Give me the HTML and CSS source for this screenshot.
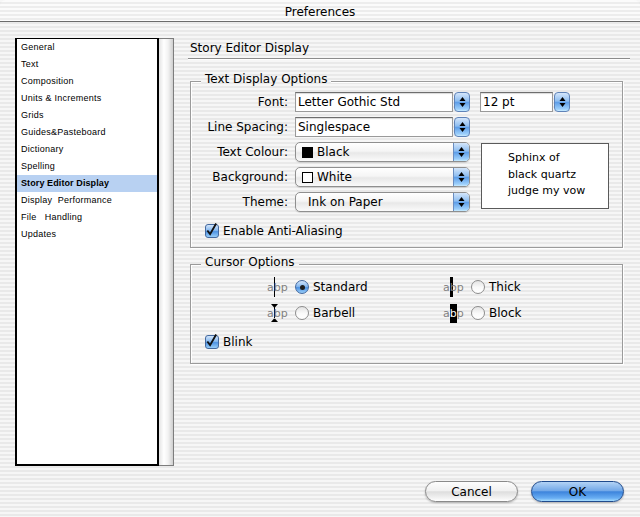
FILE: index.html
```html
<!DOCTYPE html>
<html lang="en">
  <head>
    <meta charset="UTF-8" />
    <title>Preferences</title>
    <link rel="stylesheet" href="styles.css">
  </head>
  <body>
    <div class="window">
      <div class="titlebar">Preferences</div>

      <div class="main">
        <div class="sidebar">
          <ul class="list">
            <li>General</li>
            <li>Text</li>
            <li>Composition</li>
            <li>Units &amp; Increments</li>
            <li>Grids</li>
            <li>Guides&amp;Pasteboard</li>
            <li>Dictionary</li>
            <li>Spelling</li>
            <li class="selected">Story Editor Display</li>
            <li>Display&nbsp; Performance</li>
            <li>File&nbsp;&nbsp; Handling</li>
            <li>Updates</li>
          </ul>
          <div class="track"></div>
        </div>

        <div class="pane">
          <h2 class="pane-title">Story Editor Display</h2>

          <section class="group">
            <h3 class="group-title">Text Display Options</h3>
            <div class="form">
              <label class="label">Font:</label>
              <div class="combo">
                <span class="field">Letter Gothic Std</span>
                <span class="stepper"><svg width="7" height="12" viewBox="0 0 7 12"><path d="M3.5 1L6.5 5H0.5Z M0.5 7H6.5L3.5 11Z"/></svg></span>
              </div>
              <div class="combo size">
                <span class="field">12 pt</span>
                <span class="stepper"><svg width="7" height="12" viewBox="0 0 7 12"><path d="M3.5 1L6.5 5H0.5Z M0.5 7H6.5L3.5 11Z"/></svg></span>
              </div>

              <label class="label">Line Spacing:</label>
              <div class="combo">
                <span class="field">Singlespace</span>
                <span class="stepper"><svg width="7" height="12" viewBox="0 0 7 12"><path d="M3.5 1L6.5 5H0.5Z M0.5 7H6.5L3.5 11Z"/></svg></span>
              </div>
              <div></div>

              <label class="label">Text Colour:</label>
              <div class="popup">
                <span class="value"><i class="swatch black"></i>Black</span>
                <span class="arrows"><svg width="7" height="12" viewBox="0 0 7 12"><path d="M3.5 1L6.5 5H0.5Z M0.5 7H6.5L3.5 11Z"/></svg></span>
              </div>
              <div class="preview">Sphinx of<br>black quartz<br>judge my vow</div>

              <label class="label">Background:</label>
              <div class="popup">
                <span class="value"><i class="swatch white"></i>White</span>
                <span class="arrows"><svg width="7" height="12" viewBox="0 0 7 12"><path d="M3.5 1L6.5 5H0.5Z M0.5 7H6.5L3.5 11Z"/></svg></span>
              </div>

              <label class="label">Theme:</label>
              <div class="popup">
                <span class="value indent">Ink on Paper</span>
                <span class="arrows"><svg width="7" height="12" viewBox="0 0 7 12"><path d="M3.5 1L6.5 5H0.5Z M0.5 7H6.5L3.5 11Z"/></svg></span>
              </div>
            </div>

            <div class="check-row">
              <span class="checkbox"><svg width="14" height="16" viewBox="0 0 14 16"><path d="M2.5 8.5L5.5 12.5L12 1" fill="none" stroke="#111" stroke-width="2"/></svg></span>
              Enable Anti-Aliasing
            </div>
          </section>

          <section class="group cursor-group">
            <h3 class="group-title">Cursor Options</h3>
            <div class="cursors">
              <div class="cursor-opt">
                <span class="sample">a<i class="caret"></i>bp</span>
                <span class="radio on"></span>
                Standard
              </div>
              <div class="cursor-opt">
                <span class="sample">a<i class="caret thick"></i>bp</span>
                <span class="radio"></span>
                Thick
              </div>
              <div class="cursor-opt">
                <span class="sample">a<svg class="barbell" width="7" height="18" viewBox="0 0 7 18"><path d="M0 0H7L3.5 4Z M3 3H4V15H3Z M0 18H7L3.5 14Z"/></svg>bp</span>
                <span class="radio"></span>
                Barbell
              </div>
              <div class="cursor-opt">
                <span class="sample">a<b class="block">b</b>p</span>
                <span class="radio"></span>
                Block
              </div>
            </div>

            <div class="check-row blink">
              <span class="checkbox"><svg width="14" height="16" viewBox="0 0 14 16"><path d="M2.5 8.5L5.5 12.5L12 1" fill="none" stroke="#111" stroke-width="2"/></svg></span>
              Blink
            </div>
          </section>
        </div>
      </div>

      <div class="actions">
        <button class="btn">Cancel</button>
        <button class="btn btn-default">OK</button>
      </div>
    </div>
  </body>
</html>
```

FILE: styles.css
```css
* {
  box-sizing: border-box;
}

body {
  margin: 0;
  font-family: "DejaVu Sans", sans-serif;
  font-size: 12px;
  color: #000;
}

.window {
  width: 640px;
  height: 517px;
  overflow: hidden;
  background: repeating-linear-gradient(#f6f6f6 0 2px, #e9e9e9 2px 4px);
  background-attachment: fixed;
}

.titlebar {
  height: 22px;
  line-height: 24px;
  text-align: center;
  font-size: 12px;
  border-bottom: 1px solid #6b6b6b;
  border-radius: 6px 6px 0 0;
  background: repeating-linear-gradient(#fbfbfb 0 2px, #ededed 2px 4px);
}

.main {
  display: flex;
  gap: 14px;
  padding: 16px 10px 0 15px;
}

/* left list */

.sidebar {
  display: flex;
  width: 159px;
  height: 428px;
}

.list {
  flex: 1;
  margin: 0;
  padding: 0;
  list-style: none;
  background: #fff;
  border: 2px solid #000;
  border-top-width: 1px;
  font-family: "Liberation Sans", Arial, sans-serif;
  font-size: 9px;
  letter-spacing: 0.25px;
}

.list li {
  height: 17px;
  line-height: 17px;
  padding-left: 4px;
  white-space: nowrap;
}

.list li.selected {
  background: #b8d1f2;
  font-weight: bold;
  letter-spacing: 0.1px;
}

.track {
  width: 15px;
  border: 1px solid #7d7d7d;
  border-left: 0;
  background: linear-gradient(to right, #e4e4e4, #fff 35%, #f2f2f2 65%, #cfcfcf);
}

/* right pane */

.pane {
  width: 442px;
}

.pane-title {
  margin: 0;
  height: 21px;
  line-height: 20px;
  padding-left: 2px;
  font-size: 12px;
  font-weight: normal;
  border-bottom: 1px solid #8c8c8c;
  box-shadow: 0 1px 0 #fff;
}

.group {
  margin: 22px 7px 0 2px;
  padding-bottom: 8px;
  border: 1px solid #9b9b9b;
  box-shadow: inset 1px 1px 0 #fff, 1px 1px 0 #fff;
}

.cursor-group {
  margin-top: 16px;
}

.group-title {
  width: fit-content;
  margin: -11px 0 0 10px;
  padding: 0 4px;
  font-size: 12px;
  font-weight: normal;
  line-height: 16px;
  background: repeating-linear-gradient(#f6f6f6 0 2px, #e9e9e9 2px 4px);
  background-attachment: fixed;
}

.form {
  display: grid;
  grid-template-columns: 97px 175px auto;
  grid-auto-rows: 20px;
  column-gap: 7px;
  row-gap: 5px;
  align-items: center;
  margin-top: 5px;
}

.label {
  text-align: right;
  white-space: nowrap;
}

.combo {
  display: flex;
  height: 20px;
}

.combo .field {
  flex: 1;
  padding-left: 2px;
  line-height: 18px;
  background: #fff;
  border: 1px solid #9a9a9a;
  border-top-color: #6e6e6e;
  box-shadow: inset 0 1px 1px rgba(0, 0, 0, 0.15);
}

.combo.size {
  width: 90px;
  margin-left: 3px;
}

.stepper,
.arrows {
  display: flex;
  align-items: center;
  justify-content: center;
  width: 16px;
  background: linear-gradient(#d4e6fb, #8dbdf0 45%, #5e9ee8 52%, #9ed0fb 90%, #c9ecff);
}

.stepper {
  margin-left: 1px;
  border: 1px solid #5f83b8;
  border-radius: 4px;
}

.arrows {
  border-left: 1px solid #6a8dc0;
}

.popup {
  display: flex;
  height: 20px;
  overflow: hidden;
  border: 1px solid #8f8f8f;
  border-radius: 5px;
  background: linear-gradient(#fff, #f5f5f5 45%, #e8e8e8 55%, #fafafa);
  box-shadow: 0 1px 1px rgba(0, 0, 0, 0.12);
}

.popup .value {
  flex: 1;
  display: flex;
  align-items: center;
  padding-left: 6px;
}

.popup .value.indent {
  padding-left: 12px;
}

.swatch {
  width: 11px;
  height: 11px;
  margin-right: 4px;
  border: 1px solid #000;
}

.swatch.black {
  background: #000;
}

.swatch.white {
  background: #fff;
}

.preview {
  grid-column: 3;
  grid-row: 3 / 6;
  align-self: start;
  width: 128px;
  height: 66px;
  margin: 1px 0 0 4px;
  padding: 6px 0 0 26px;
  font-size: 11px;
  line-height: 16.5px;
  background: #fff;
  border: 1px solid #5a5a5a;
}

.check-row {
  display: flex;
  align-items: center;
  gap: 4px;
  height: 16px;
  margin: 11px 0 0 14px;
}

.check-row.blink {
  margin-top: 12px;
  margin-bottom: 5px;
}

.checkbox {
  display: flex;
  align-items: flex-end;
  width: 14px;
  height: 14px;
  border: 1px solid #44699f;
  border-radius: 3px;
  background: linear-gradient(#d2e5fb, #86b8ee 45%, #4f93e2 55%, #97cdf9);
}

.checkbox svg {
  margin: 0 0 -1px -1px;
}

/* cursor options */

.cursors {
  display: grid;
  grid-template-columns: 176px auto;
  grid-auto-rows: 18px;
  row-gap: 8px;
  margin: 8px 0 0 76px;
}

.cursor-opt {
  display: flex;
  align-items: center;
  gap: 4px;
}

.sample {
  display: flex;
  align-items: center;
  width: 21px;
  margin-right: 3px;
  font-size: 11px;
  color: #808080;
}

.caret {
  width: 1px;
  height: 20px;
  margin: 0 -1px 0 0;
  background: #000;
}

.caret.thick {
  width: 3px;
  margin-right: -3px;
}

.barbell {
  margin: 0 -4px 0 -3px;
  fill: #000;
}

.block {
  font-weight: normal;
  color: #fff;
  background: #000;
  line-height: 19px;
}

.radio {
  position: relative;
  width: 14px;
  height: 14px;
  border: 1px solid #8d8d8d;
  border-radius: 50%;
  background: linear-gradient(#e4e4e4, #fafafa 55%, #fff);
}

.radio.on {
  border-color: #44699f;
  background: linear-gradient(#d2e5fb, #86b8ee 45%, #4f93e2 55%, #97cdf9);
}

.radio.on::after {
  content: "";
  position: absolute;
  left: 3.5px;
  top: 3.5px;
  width: 5px;
  height: 5px;
  border-radius: 50%;
  background: #1d1d1d;
}

/* buttons */

.actions {
  display: flex;
  justify-content: flex-end;
  gap: 13px;
  margin-top: 15px;
  padding-right: 16px;
}

.btn {
  width: 93px;
  height: 21px;
  padding: 0;
  font-family: "DejaVu Sans", sans-serif;
  font-size: 12px;
  color: #000;
  border: 1px solid #8a8a8a;
  border-radius: 11px;
  background: linear-gradient(#fdfdfd, #f1f1f1 45%, #dedede 52%, #f3f3f3 85%, #fff);
  box-shadow: 0 1px 2px rgba(0, 0, 0, 0.25);
}

.btn-default {
  border-color: #1f4a8c;
  background: linear-gradient(#b3d3f5, #74a9e8 45%, #3d84dc 52%, #69aef3 85%, #a9defe);
}
```
